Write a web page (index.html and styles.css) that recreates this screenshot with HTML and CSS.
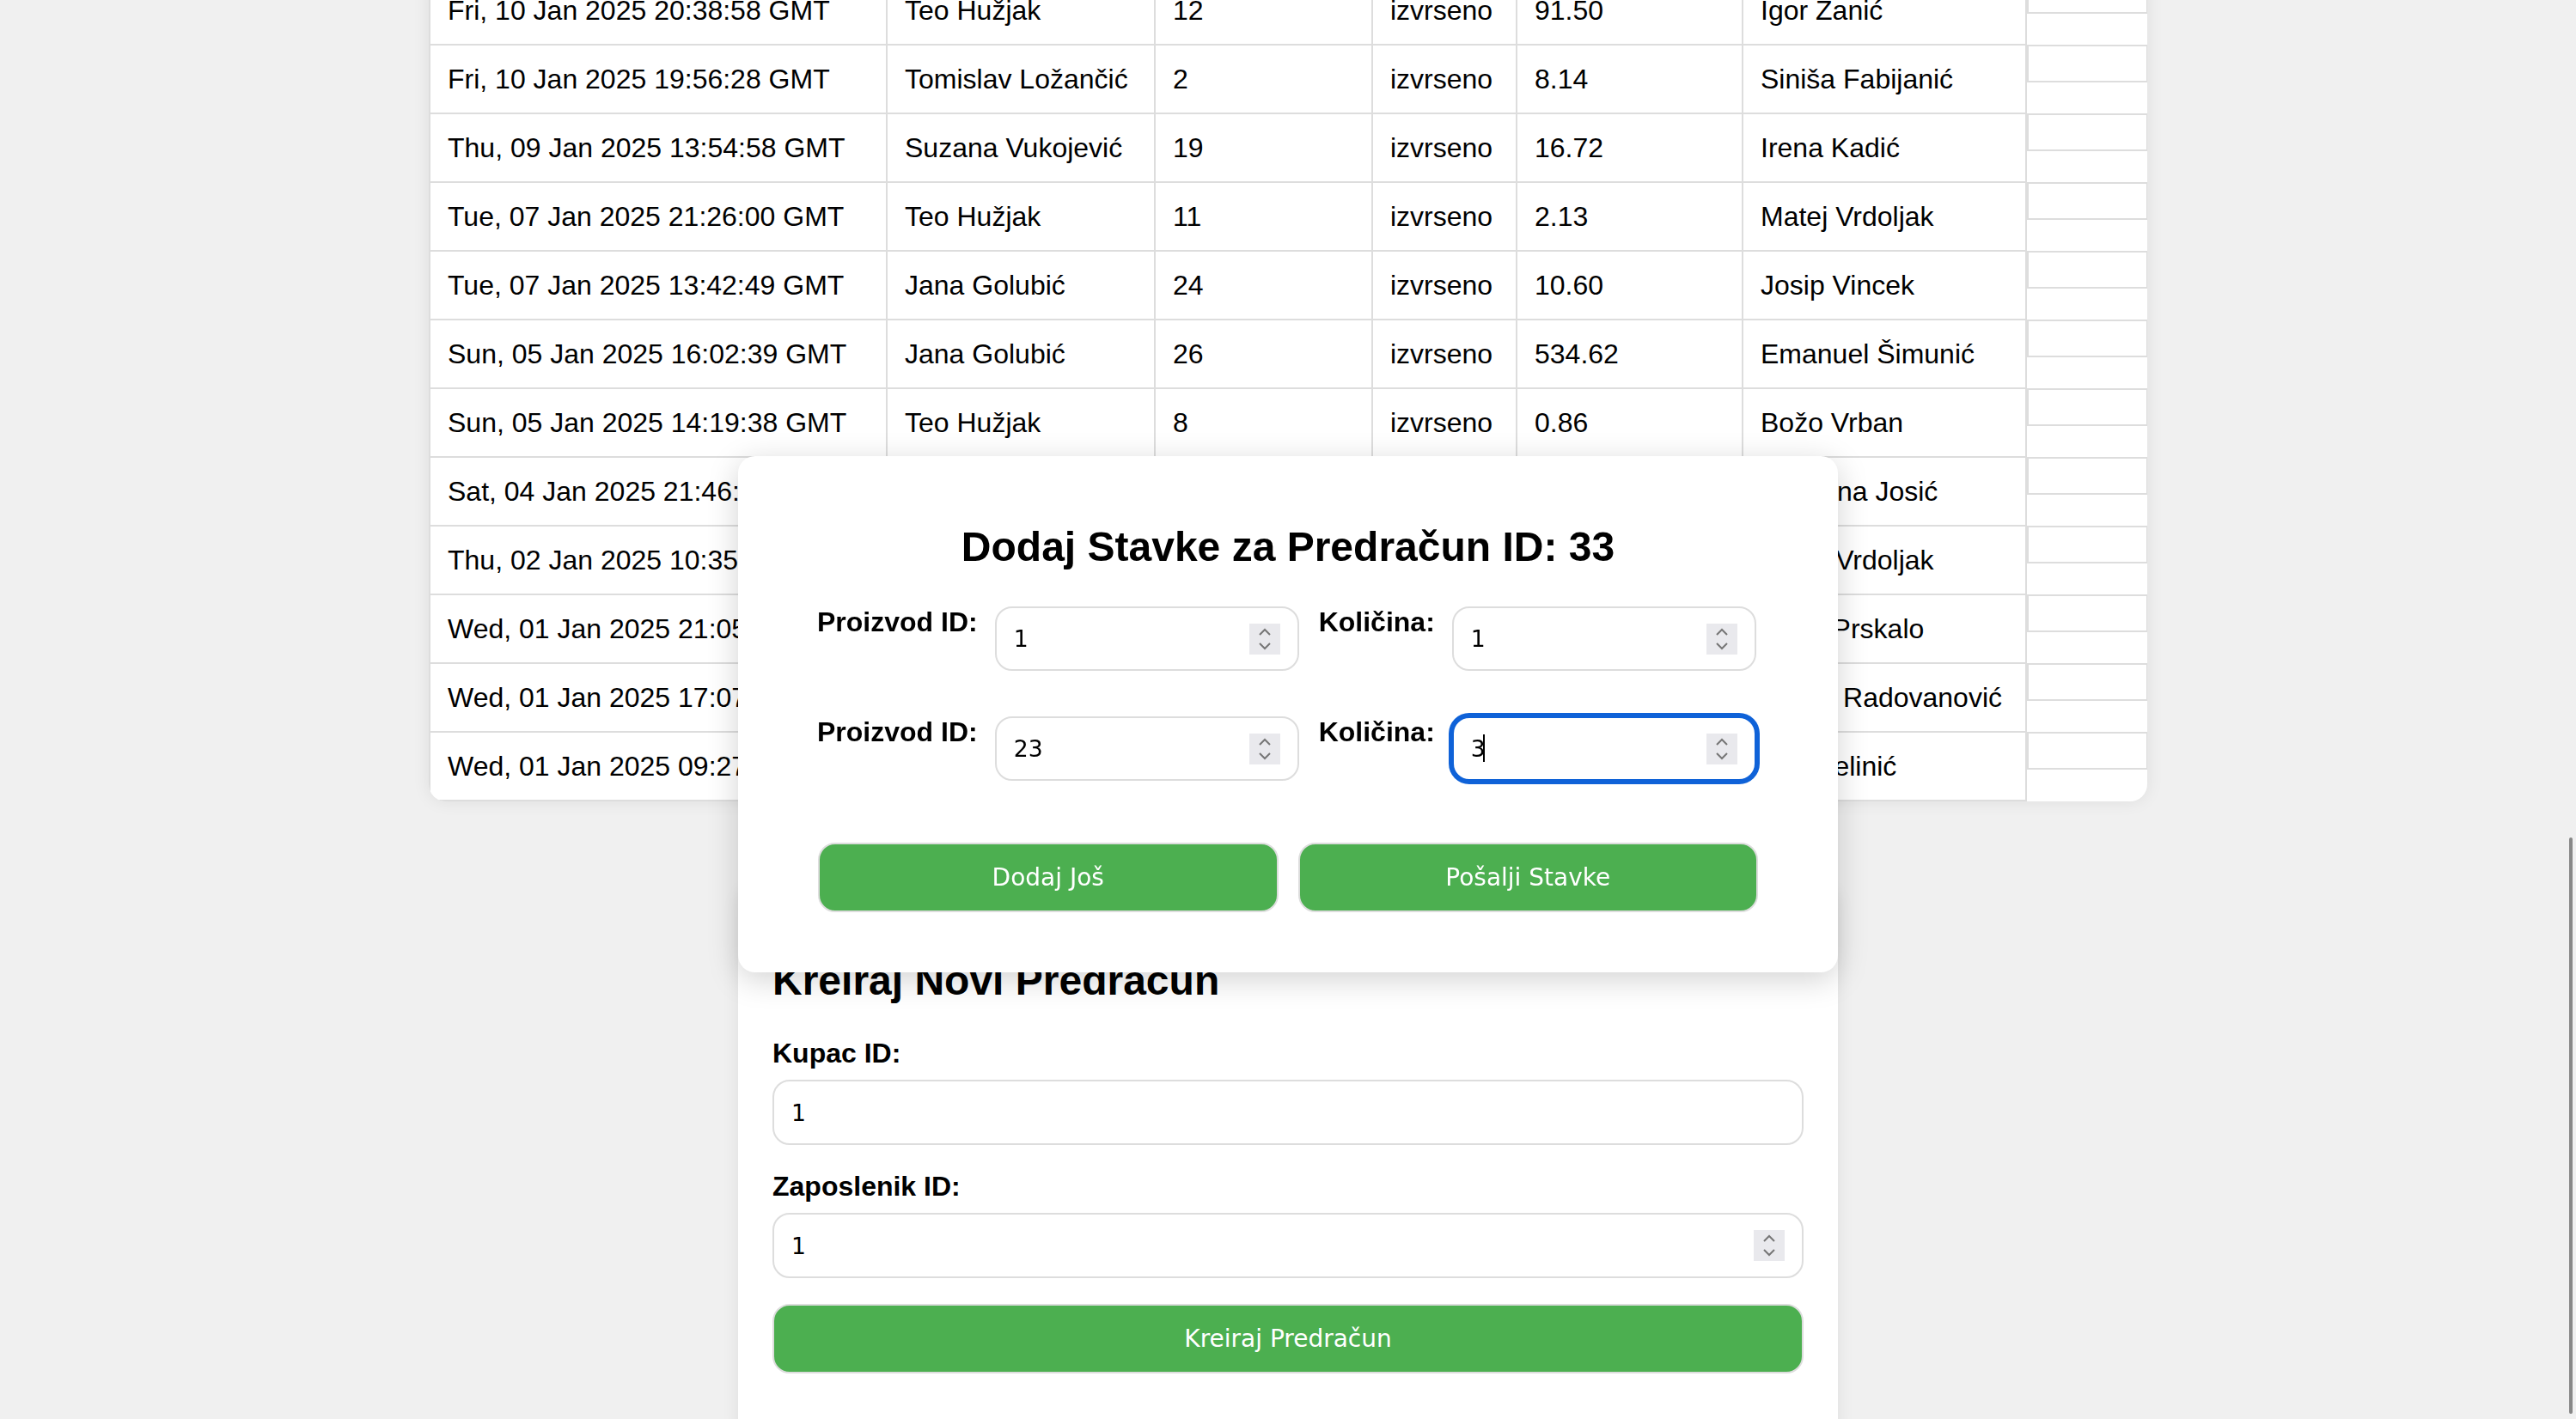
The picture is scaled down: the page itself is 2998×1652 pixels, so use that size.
FILE: index.html
```html
<!DOCTYPE html>
<html lang="hr">
<head>
<meta charset="utf-8">
<title>Predračuni</title>
<link rel="stylesheet" href="styles.css">
</head>
<body>
<main class="page">
  <section class="table-card">
    <table class="invoices">
      <colgroup>
        <col class="col-datum"><col class="col-kupac"><col class="col-id"><col class="col-status"><col class="col-iznos"><col class="col-zaposlenik"><col class="col-akcije">
      </colgroup>
      <tbody>
        <tr><td>Fri, 10 Jan 2025 20:38:58 GMT</td><td>Teo Hužjak</td><td>12</td><td>izvrseno</td><td>91.50</td><td>Igor Zanić</td><td class="actions"><div class="action-box"></div></td></tr>
        <tr><td>Fri, 10 Jan 2025 19:56:28 GMT</td><td>Tomislav Ložančić</td><td>2</td><td>izvrseno</td><td>8.14</td><td>Siniša Fabijanić</td><td class="actions"><div class="action-box"></div></td></tr>
        <tr><td>Thu, 09 Jan 2025 13:54:58 GMT</td><td>Suzana Vukojević</td><td>19</td><td>izvrseno</td><td>16.72</td><td>Irena Kadić</td><td class="actions"><div class="action-box"></div></td></tr>
        <tr><td>Tue, 07 Jan 2025 21:26:00 GMT</td><td>Teo Hužjak</td><td>11</td><td>izvrseno</td><td>2.13</td><td>Matej Vrdoljak</td><td class="actions"><div class="action-box"></div></td></tr>
        <tr><td>Tue, 07 Jan 2025 13:42:49 GMT</td><td>Jana Golubić</td><td>24</td><td>izvrseno</td><td>10.60</td><td>Josip Vincek</td><td class="actions"><div class="action-box"></div></td></tr>
        <tr><td>Sun, 05 Jan 2025 16:02:39 GMT</td><td>Jana Golubić</td><td>26</td><td>izvrseno</td><td>534.62</td><td>Emanuel Šimunić</td><td class="actions"><div class="action-box"></div></td></tr>
        <tr><td>Sun, 05 Jan 2025 14:19:38 GMT</td><td>Teo Hužjak</td><td>8</td><td>izvrseno</td><td>0.86</td><td>Božo Vrban</td><td class="actions"><div class="action-box"></div></td></tr>
        <tr><td>Sat, 04 Jan 2025 21:46:10 GMT</td><td>Teo Hužjak</td><td>5</td><td>izvrseno</td><td>45.20</td><td>Gordana Josić</td><td class="actions"><div class="action-box"></div></td></tr>
        <tr><td>Thu, 02 Jan 2025 10:35:44 GMT</td><td>Suzana Vukojević</td><td>3</td><td>izvrseno</td><td>12.90</td><td>Matej Vrdoljak</td><td class="actions"><div class="action-box"></div></td></tr>
        <tr><td>Wed, 01 Jan 2025 21:05:31 GMT</td><td>Jana Golubić</td><td>17</td><td>izvrseno</td><td>7.45</td><td>Josip Prskalo</td><td class="actions"><div class="action-box"></div></td></tr>
        <tr><td>Wed, 01 Jan 2025 17:07:22 GMT</td><td>Tomislav Ložančić</td><td>9</td><td>izvrseno</td><td>120.00</td><td>Marija Radovanović</td><td class="actions"><div class="action-box"></div></td></tr>
        <tr><td>Wed, 01 Jan 2025 09:27:05 GMT</td><td>Teo Hužjak</td><td>6</td><td>izvrseno</td><td>3.75</td><td>Ivan Jelinić</td><td class="actions"><div class="action-box"></div></td></tr>
      </tbody>
    </table>
  </section>

  <section class="form-card">
    <h2 class="card-title">Kreiraj Novi Predračun</h2>
    <form class="create-form">
      <label class="field-label" for="kupac">Kupac ID:</label>
      <input class="field-input full" id="kupac" type="text" value="1">
      <label class="field-label" for="zaposlenik">Zaposlenik ID:</label>
      <div class="num-field full">
        <input class="field-input full" id="zaposlenik" type="number" value="1">
        <span class="spin" aria-hidden="true"><svg viewBox="0 0 36 36" width="36" height="36"><path d="M12 13 L18 7 L24 13"/><path d="M12 23 L18 29 L24 23"/></svg></span>
      </div>
      <button type="button" class="btn btn-wide">Kreiraj Predračun</button>
    </form>
  </section>
</main>

<div class="modal">
  <h2 class="modal-title">Dodaj Stavke za Predračun ID: 33</h2>
  <div class="items">
    <div class="item-row">
      <div class="pair">
        <label class="pair-label" for="p1">Proizvod ID:</label>
        <div class="num-field">
          <input class="field-input small" id="p1" type="number" value="1">
          <span class="spin" aria-hidden="true"><svg viewBox="0 0 36 36" width="36" height="36"><path d="M12 13 L18 7 L24 13"/><path d="M12 23 L18 29 L24 23"/></svg></span>
        </div>
      </div>
      <div class="pair">
        <label class="pair-label" for="k1">Količina:</label>
        <div class="num-field">
          <input class="field-input small" id="k1" type="number" value="1">
          <span class="spin" aria-hidden="true"><svg viewBox="0 0 36 36" width="36" height="36"><path d="M12 13 L18 7 L24 13"/><path d="M12 23 L18 29 L24 23"/></svg></span>
        </div>
      </div>
    </div>
    <div class="item-row">
      <div class="pair">
        <label class="pair-label" for="p2">Proizvod ID:</label>
        <div class="num-field">
          <input class="field-input small" id="p2" type="number" value="23">
          <span class="spin" aria-hidden="true"><svg viewBox="0 0 36 36" width="36" height="36"><path d="M12 13 L18 7 L24 13"/><path d="M12 23 L18 29 L24 23"/></svg></span>
        </div>
      </div>
      <div class="pair">
        <label class="pair-label" for="k2">Količina:</label>
        <div class="num-field">
          <input class="field-input small is-focused" id="k2" type="number" value="3">
          <span class="caret" aria-hidden="true"></span>
          <span class="spin" aria-hidden="true"><svg viewBox="0 0 36 36" width="36" height="36"><path d="M12 13 L18 7 L24 13"/><path d="M12 23 L18 29 L24 23"/></svg></span>
        </div>
      </div>
    </div>
  </div>
  <div class="modal-actions">
    <button type="button" class="btn">Dodaj Još</button>
    <button type="button" class="btn">Pošalji Stavke</button>
  </div>
</div>

<div class="scrollbar" aria-hidden="true"></div>
</body>
</html>
```

FILE: styles.css
```css
* {
  box-sizing: border-box;
}

html,
body {
  height: 100%;
  overflow: hidden;
}

body {
  margin: 0;
  background: #f0f0f0;
  font-family: "Liberation Sans", Arial, sans-serif;
  color: #000;
}

.page {
  width: 2000px;
  margin: 0 auto;
}

/* ---------- table ---------- */
.table-card {
  margin-top: -29px;
  background: #fff;
  border-radius: 20px;
  overflow: hidden;
  box-shadow: 0 0 20px rgba(0, 0, 0, 0.08);
}

.invoices {
  width: 100%;
  border-collapse: collapse;
  table-layout: fixed;
  font-size: 32px;
}

.col-datum { width: 532px; }
.col-kupac { width: 312px; }
.col-id { width: 253px; }
.col-status { width: 168px; }
.col-iznos { width: 263px; }
.col-zaposlenik { width: 330px; }
.col-akcije { width: 142px; }

.invoices td {
  padding: 20px;
  line-height: 38px;
  border: 2px solid #ddd;
  white-space: nowrap;
  overflow: hidden;
  text-align: left;
}

.invoices td.actions {
  padding: 0;
  border-top: none;
  border-bottom: none;
  border-right: none;
  vertical-align: top;
}

.action-box {
  height: 44px;
  border: 2px solid #ddd;
}

/* ---------- create form ---------- */
.form-card {
  width: 1280px;
  margin: 101px auto 0;
  padding: 40px 40px 80px;
  background: #fff;
  border-radius: 20px;
  box-shadow: 0 0 20px rgba(0, 0, 0, 0.08);
}

.card-title {
  margin: 40px 0 39px;
  font-size: 48px;
  font-weight: bold;
  line-height: 55px;
}

.field-label {
  display: block;
  margin-bottom: 12px;
  font-size: 32px;
  font-weight: bold;
  line-height: 37px;
}

.field-input {
  display: block;
  height: 76px;
  padding: 0 20px;
  border: 2px solid #ddd;
  border-radius: 20px;
  background: #fff;
  color: #000;
  font-family: "DejaVu Sans", sans-serif;
  font-size: 26.67px;
  outline: none;
}

.field-input.full {
  width: 100%;
  margin-bottom: 30px;
}

.field-input.small {
  width: 354px;
  height: 75px;
}

.field-input[type="number"] {
  -moz-appearance: textfield;
}

.field-input::-webkit-inner-spin-button,
.field-input::-webkit-outer-spin-button {
  -webkit-appearance: none;
  margin: 0;
}

.num-field {
  position: relative;
  flex-shrink: 0;
}

.spin {
  position: absolute;
  top: 20px;
  right: 22px;
  width: 36px;
  height: 36px;
  background: #e9e9ed;
}

.spin svg {
  display: block;
  fill: none;
  stroke: #767676;
  stroke-width: 2;
}

.caret {
  position: absolute;
  left: 36px;
  top: 21px;
  width: 2px;
  height: 32px;
  background: #000;
}

.is-focused {
  border-color: #0f62d8;
  box-shadow: 0 0 0 4px #0f62d8;
}

.btn {
  display: block;
  height: 81px;
  border: 2px solid #ddd;
  border-radius: 20px;
  background: #4caf50;
  color: #fff;
  font-family: "DejaVu Sans", sans-serif;
  font-size: 28px;
  cursor: pointer;
}

.btn-wide {
  width: 100%;
}

/* ---------- modal ---------- */
.modal {
  position: fixed;
  top: 531px;
  left: 50%;
  width: 1280px;
  margin-left: -640px;
  padding: 40px;
  background: #fff;
  border-radius: 20px;
  box-shadow: 0 8px 36px rgba(0, 0, 0, 0.18);
}

.modal-title {
  margin: 38px 0 42px;
  font-size: 48px;
  font-weight: bold;
  line-height: 55px;
  text-align: center;
}

.items {
  width: 1096px;
  margin: 0 auto;
  display: flex;
  flex-direction: column;
  gap: 53px;
}

.item-row {
  display: flex;
  align-items: flex-start;
  gap: 23px;
}

.pair {
  display: flex;
  align-items: flex-start;
  gap: 20px;
  flex-shrink: 0;
}

.pair-label {
  flex-shrink: 0;
  white-space: nowrap;
  font-size: 32px;
  font-weight: bold;
  line-height: 37px;
}

.modal-actions {
  width: 1094px;
  margin: 72px auto 30px;
  display: flex;
  gap: 23px;
}

.modal-actions .btn {
  flex: 1;
}

/* overlay scrollbar thumb */
.scrollbar {
  position: fixed;
  top: 975px;
  right: 4px;
  width: 4px;
  height: 671px;
  border-radius: 2px;
  background: #888;
}
```
